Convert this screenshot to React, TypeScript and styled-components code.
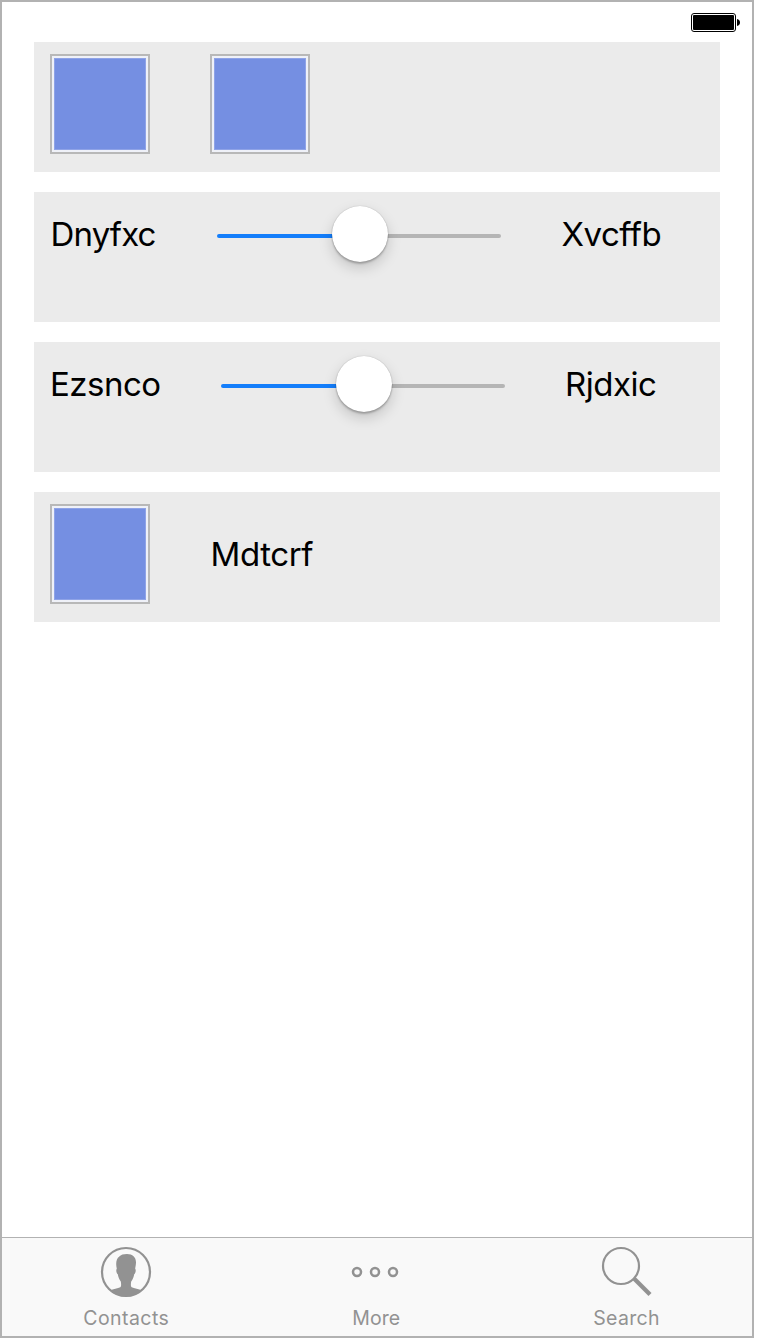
import React from "react";
import styled, { createGlobalStyle } from "styled-components";

const GlobalStyle = createGlobalStyle`
  *, *::before { box-sizing: border-box; }
  body { margin: 0; background: #fff; font-family: Inter, "Liberation Sans", sans-serif; }
`;

const Screen = styled.main`
  display: flex;
  flex-direction: column;
  width: 754px;
  height: 1338px;
  border: 2px solid #b2b2b2;
  background: #fff;
`;

const StatusBar = styled.header`
  display: flex;
  justify-content: flex-end;
  height: 40px;
  padding: 11px 12px 0 0;
`;

const Content = styled.section`
  display: flex;
  flex: 1;
  flex-direction: column;
  gap: 20px;
  padding: 0 32px;
`;

const Panel = styled.div`
  display: flex;
  gap: 60px;
  align-items: flex-start;
  height: 130px;
  padding: 12px 16px;
  background: #ebebeb;
`;

const Swatch = styled.div`
  width: 100px;
  height: 100px;
  padding: 2px;
  border: 2px solid #b8b8b8;
  background: #eff1f8;

  &::before {
    content: "";
    display: block;
    width: 92px;
    height: 92px;
    border: 1px solid #8fa3e7;
    background: #758fe2;
  }
`;

const Label = styled.span<{ $width: number; $spacing: number; $top?: number; $indent?: number }>`
  width: ${(p) => p.$width}px;
  margin-top: ${(p) => p.$top ?? 0}px;
  padding-left: ${(p) => p.$indent ?? 0.5}px;
  font-size: 33px;
  line-height: 60px;
  letter-spacing: ${(p) => p.$spacing}px;
  white-space: nowrap;
  color: #000;
`;

const Track = styled.div`
  display: flex;
  align-items: center;
  width: 284px;
  height: 4px;
  margin-top: 30px;
  border-radius: 2px;
  background: linear-gradient(to right, #147efb 50%, #b5b5b5 50%);
`;

const Knob = styled.div`
  width: 56px;
  height: 56px;
  margin: -4px 0 0 115px;
  flex-shrink: 0;
  border-radius: 50%;
  background: #fff;
  box-shadow: 0 0 1px rgba(0, 0, 0, 0.3), 0 2px 2px rgba(0, 0, 0, 0.22), 0 6px 14px rgba(0, 0, 0, 0.17);
`;

const TabBar = styled.nav`
  display: grid;
  grid-template-columns: 248px 250px 252px;
  height: 99px;
  border-top: 1px solid #b2b2b2;
  background: #f9f9f9;
`;

const Tab = styled.div`
  display: flex;
  flex-direction: column;
  align-items: center;
  padding-top: 8px;
  color: #929292;
`;

const TabLabel = styled.span<{ $spacing: number; $indent?: number }>`
  margin-top: 7px;
  padding-left: ${(p) => p.$indent ?? 0}px;
  font-size: 19.5px;
  line-height: 26px;
  letter-spacing: ${(p) => p.$spacing}px;
`;

const Battery = () => (
  <svg width="49" height="20" viewBox="0 0 49 20">
    <rect x="0.5" y="0.5" width="44" height="18" rx="2.5" fill="#fff" stroke="#000" />
    <rect x="2" y="2" width="41" height="15" rx="1" fill="#000" />
    <path d="M46 6Q49 6.8 49 9.5T46 13Z" fill="#000" />
  </svg>
);

const ContactsIcon = () => (
  <svg width="52" height="52" viewBox="0 0 52 52">
    <circle cx="26" cy="26" r="24" fill="none" stroke="currentColor" strokeWidth="2.2" />
    <path
      d="M10 44.5C13 42.7 18 42.4 20.3 41.2C21.4 40.5 21.2 37.5 20.8 35.4C19.4 33.7 18.2 31 17.8 28.2C16.5 27.7 15.7 23.8 16.8 22.8C15.5 17 16.3 12.7 19.3 10.6C20.8 8.8 23.5 8 27 8C32.5 8 36 11.2 36 16.2C36 18.8 35.4 20.8 35.2 22.8C36.3 23.7 35.5 27.7 34.2 28.2C33.8 31 32.6 33.7 31.2 35.4C30.8 37.5 30.6 40.5 31.7 41.2C34 42.4 39 42.7 42 44.5C33 52.5 19 52.5 10 44.5Z"
      fill="currentColor"
    />
  </svg>
);

const MoreIcon = () => (
  <svg width="52" height="52" viewBox="0 0 52 52" fill="none" stroke="currentColor" strokeWidth="2.5">
    <circle cx="8" cy="26" r="4" />
    <circle cx="26" cy="26" r="4" />
    <circle cx="44" cy="26" r="4" />
  </svg>
);

const SearchIcon = () => (
  <svg width="52" height="52" viewBox="0 0 52 52" fill="none" stroke="currentColor">
    <circle cx="21" cy="20" r="18" strokeWidth="2.2" />
    <path d="M34 32.5L50 48.5" strokeWidth="4.3" />
  </svg>
);

const Slider = () => (
  <Track>
    <Knob />
  </Track>
);

export default function App() {
  return (
    <>
      <GlobalStyle />
      <Screen>
        <StatusBar>
          <Battery />
        </StatusBar>
        <Content>
          <Panel>
            <Swatch />
            <Swatch />
          </Panel>
          <Panel>
            <Label $width={107} $spacing={-0.85}>Dnyfxc</Label>
            <Slider />
            <Label $width={100} $spacing={-0.5}>Xvcffb</Label>
          </Panel>
          <Panel>
            <Label $width={111} $spacing={-0.5} $indent={0}>Ezsnco</Label>
            <Slider />
            <Label $width={92} $spacing={-0.5} $indent={0}>Rjdxic</Label>
          </Panel>
          <Panel>
            <Swatch />
            <Label $width={104} $spacing={-0.4} $top={20}>Mdtcrf</Label>
          </Panel>
        </Content>
        <TabBar>
          <Tab>
            <ContactsIcon />
            <TabLabel $spacing={0.45} $indent={0.5}>Contacts</TabLabel>
          </Tab>
          <Tab>
            <MoreIcon />
            <TabLabel $spacing={0.1} $indent={2.5}>More</TabLabel>
          </Tab>
          <Tab>
            <SearchIcon />
            <TabLabel $spacing={0.3} $indent={1}>Search</TabLabel>
          </Tab>
        </TabBar>
      </Screen>
    </>
  );
}
